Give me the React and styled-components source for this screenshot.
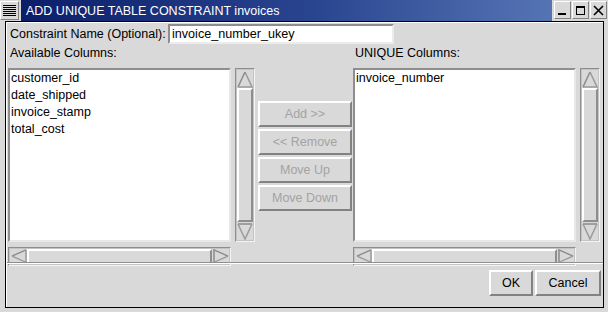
import React from 'react';
import styled, { createGlobalStyle } from 'styled-components';

const GlobalStyle = createGlobalStyle`
  html, body { margin: 0; padding: 0; background: #d9d9d9; }
`;

const Window = styled.div`
  width: 608px;
  height: 312px;
  display: flex;
  flex-direction: column;
  background: #d9d9d9;
  font-family: "Liberation Sans", Arial, sans-serif;
  font-size: 12.5px;
  color: #000;
  box-sizing: border-box;
  overflow: hidden;
`;

const TitleBar = styled.div`
  height: 21px;
  display: flex;
  align-items: stretch;
  flex-shrink: 0;
`;

const MenuIcon = styled.div`
  width: 19px;
  height: 19px;
  margin: 1px 2px 1px 0;
  box-sizing: border-box;
  border: 1px solid #fff;
  border-right-color: #828282;
  border-bottom-color: #828282;
  background: repeating-linear-gradient(
    to bottom,
    #d9d9d9 0px,
    #d9d9d9 1px,
    #000 1px,
    #000 2px
  );
  background-size: 13px 13px;
  background-position: 2px 2px;
  background-repeat: no-repeat;
`;

const Title = styled.div`
  flex: 1;
  display: flex;
  align-items: center;
  padding-left: 5px;
  background: linear-gradient(to right, #0c1e6a 0%, #2a4590 55%, #5574b4 100%);
  color: #fff;
  font-size: 12.5px;
  white-space: nowrap;
`;

const TitleButtons = styled.div`
  display: flex;
  gap: 1px;
  padding: 1px 1px 1px 2px;
`;

const TitleBtn = styled.div`
  width: 17px;
  height: 18px;
  box-sizing: border-box;
  background: #d9d9d9;
  border: 1px solid #fff;
  border-right-color: #828282;
  border-bottom-color: #828282;
  display: flex;
  align-items: center;
  justify-content: center;
`;

const Body = styled.div`
  flex: 1;
  margin: 0 4px 4px 5px;
  border: 1px solid #000;
  box-shadow: inset 1px 1px 0 #fff;
  display: flex;
  flex-direction: column;
  min-height: 0;
`;

const NameRow = styled.div`
  display: flex;
  align-items: center;
  height: 20px;
  margin-top: 2px;
  padding-left: 4px;
`;

const NameLabel = styled.span`
  width: 158px;
`;

const TextField = styled.div`
  width: 226px;
  height: 20px;
  box-sizing: border-box;
  background: #fff;
  border: 2px solid #8e8e8e;
  border-right-color: #ececec;
  border-bottom-color: #ececec;
  padding-left: 2px;
  line-height: 16px;
  font-size: 12.6px;
`;

const Columns = styled.div`
  display: flex;
  margin-top: 2px;
  padding-left: 2px;
`;

const Panel = styled.div`
  width: 247px;
  display: grid;
  grid-template-columns: 223px 20px;
  grid-template-rows: 22px 174px 19px;
  column-gap: 4px;
`;

const PanelLabel = styled.div`
  grid-column: 1 / 3;
  line-height: 14px;
  padding-left: 2px;
`;

const List = styled.div`
  background: #fff;
  box-sizing: border-box;
  border: 2px solid #8e8e8e;
  border-right-color: #e8e8e8;
  border-bottom-color: #e8e8e8;
  padding: 0 1px;
`;

const Item = styled.div`
  height: 17px;
  line-height: 17px;
`;

const VTrack = styled.div`
  box-sizing: border-box;
  display: flex;
  flex-direction: column;
  background: #c3c3c3;
  border: 1px solid #8e8e8e;
  border-right-color: #f4f4f4;
  border-bottom-color: #f4f4f4;
  padding: 1px;
`;

const HTrack = styled(VTrack)`
  flex-direction: row;
  margin-top: 5px;
  height: 19px;
`;

const Arrow = styled.div`
  flex: 0 0 ${p => p.$size}px;
  display: flex;
  align-items: center;
  justify-content: center;
  background: #d9d9d9;
`;

const Thumb = styled.div`
  flex: 1;
  box-sizing: border-box;
  background: #d9d9d9;
  border: 2px solid #fff;
  border-right-color: #8e8e8e;
  border-bottom-color: #8e8e8e;
`;

const Middle = styled.div`
  width: 94px;
  margin: 0 1px 0 3px;
  padding-top: 55px;
  display: flex;
  flex-direction: column;
  gap: 2px;
`;

const Button = styled.div`
  height: 26px;
  width: ${p => (p.$w ? `${p.$w}px` : 'auto')};
  box-sizing: border-box;
  display: flex;
  align-items: center;
  justify-content: center;
  background: #d9d9d9;
  border: 2px solid #fff;
  border-right-color: #828282;
  border-bottom-color: #828282;
  color: ${p => (p.$disabled ? '#a3a3a3' : '#000')};
`;

const Separator = styled.div`
  margin: 1px 0 0 1px;
  height: 0;
  border-top: 1px solid #8e8e8e;
  border-bottom: 1px solid #fff;
`;

const Footer = styled.div`
  display: flex;
  justify-content: flex-end;
  gap: 2px;
  padding: 6px 2px 0 0;
`;

// bevelled triangle: light edges first, dark edges second
const arrows = {
  up: { light: 'M1 16 L8 1', dark: 'M8 1 L15 16 L1 16' },
  down: { light: 'M1 1 L15 1', dark: 'M15 1 L8 16 L1 1' },
  left: { light: 'M1 8 L15 1', dark: 'M15 1 L15 15 L1 8' },
  right: { light: 'M1 15 L1 1 L15 8', dark: 'M15 8 L1 15' },
};

const ArrowIcon = ({ dir, w = 16, h = 17 }) => {
  const a = arrows[dir];
  return (
    <svg width={w} height={h} viewBox="0 0 16 17" preserveAspectRatio="none">
      <path d={a.light + ' ' + a.dark.replace(/^M[\d ]+/, m => 'L' + m.slice(1)) + ' Z'} fill="#d9d9d9" />
      <path d={a.light} fill="none" stroke="#8a8a8a" strokeWidth="1.5" />
      <path d={a.dark} fill="none" stroke="#9a9a9a" strokeWidth="1.5" />
    </svg>
  );
};

const VScroll = () => (
  <VTrack>
    <Arrow $size={18}><ArrowIcon dir="up" /></Arrow>
    <Thumb />
    <Arrow $size={18}><ArrowIcon dir="down" /></Arrow>
  </VTrack>
);

const HScroll = () => (
  <HTrack>
    <Arrow $size={17}><ArrowIcon dir="left" w={16} h={15} /></Arrow>
    <Thumb />
    <Arrow $size={17}><ArrowIcon dir="right" w={16} h={15} /></Arrow>
  </HTrack>
);

const ColumnPanel = ({ label, items }) => (
  <Panel>
    <PanelLabel>{label}</PanelLabel>
    <List>
      {items.map(name => <Item key={name}>{name}</Item>)}
    </List>
    <VScroll />
    <HScroll />
  </Panel>
);

export default function App() {
  return (
    <Window>
      <GlobalStyle />
      <TitleBar>
        <MenuIcon />
        <Title>ADD UNIQUE TABLE CONSTRAINT invoices</Title>
        <TitleButtons>
          <TitleBtn>
            <svg width="11" height="11" viewBox="0 0 11 11"><rect x="1" y="8" width="8" height="2" fill="#000" /></svg>
          </TitleBtn>
          <TitleBtn>
            <svg width="11" height="11" viewBox="0 0 11 11"><rect x="1.5" y="1.5" width="8" height="8" fill="none" stroke="#000" /><rect x="1" y="1" width="9" height="2" fill="#000" /></svg>
          </TitleBtn>
          <TitleBtn>
            <svg width="11" height="11" viewBox="0 0 11 11"><path d="M1 1 L10 10 M10 1 L1 10" stroke="#000" strokeWidth="1.6" /></svg>
          </TitleBtn>
        </TitleButtons>
      </TitleBar>
      <Body>
        <NameRow>
          <NameLabel>Constraint Name (Optional):</NameLabel>
          <TextField>invoice_number_ukey</TextField>
        </NameRow>
        <Columns>
          <ColumnPanel
            label="Available Columns:"
            items={['customer_id', 'date_shipped', 'invoice_stamp', 'total_cost']}
          />
          <Middle>
            <Button $disabled>Add &gt;&gt;</Button>
            <Button $disabled>&lt;&lt; Remove</Button>
            <Button $disabled>Move Up</Button>
            <Button $disabled>Move Down</Button>
          </Middle>
          <ColumnPanel label="UNIQUE Columns:" items={['invoice_number']} />
        </Columns>
        <Separator />
        <Footer>
          <Button $w={44}>OK</Button>
          <Button $w={66}>Cancel</Button>
        </Footer>
      </Body>
    </Window>
  );
}
